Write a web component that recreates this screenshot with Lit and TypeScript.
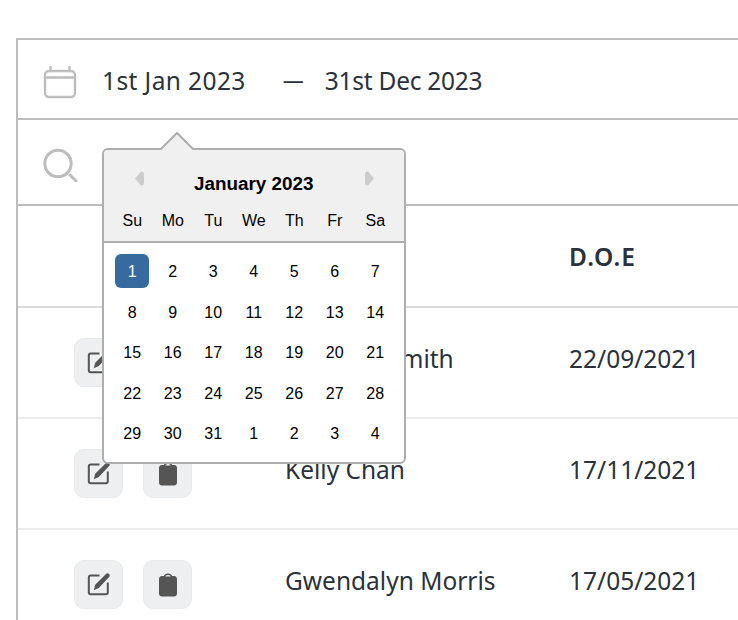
import { LitElement, html, css } from "lit";
import { customElement } from "lit/decorators.js";

const editIcon = html`<svg viewBox="0 0 24 24" width="24" height="24" aria-hidden="true">
  <path d="M12.500 2.500H3.800c-1.100 0-2 .9-2 2v14.700c0 1.100.9 2 2 2h15c1.100 0 2-.9 2-2V9.500" fill="none" stroke="#555" stroke-width="2"/>
  <path d="M19 .9c.9-.9 2.300-.9 3.100 0 .9.900.9 2.300 0 3.100L11.800 15 6.800 17.200 8.200 11.700z" fill="#555"/>
</svg>`;

const clipIcon = html`<svg viewBox="0 0 24 24" width="24" height="24" aria-hidden="true">
  <path fill-rule="evenodd" d="M6 3h1.800C8.300 1.400 10 .5 12 .5s3.700.9 4.200 2.500H18c1.700 0 3 1.300 3 3v14.500c0 1.700-1.300 3-3 3H6c-1.700 0-3-1.300-3-3V6c0-1.700 1.300-3 3-3zM9.300 3.500h5.400C14.300 2.500 13.300 2 12 2s-2.300.5-2.700 1.500z" fill="#555"/>
</svg>`;

const weeks = [
  [1, 2, 3, 4, 5, 6, 7],
  [8, 9, 10, 11, 12, 13, 14],
  [15, 16, 17, 18, 19, 20, 21],
  [22, 23, 24, 25, 26, 27, 28],
  [29, 30, 31, 1, 2, 3, 4],
];
const rows = [
  ["Michelle Smith", "22/09/2021"],
  ["Kelly Chan", "17/11/2021"],
  ["Gwendalyn Morris", "17/05/2021"],
];

@customElement("app-root")
export class AppRoot extends LitElement {
  static styles = css`
    :host {
      display: block;
      height: 620px;
      overflow: hidden;
      background: #fff;
      font-family: "Noto Sans", "Open Sans", sans-serif;
      color: #2b323b;
    }
    .wrap {
      position: relative;
      margin: 38px 0 0 16px;
      border-top: 2px solid #bdbdbd;
      border-left: 2px solid #bdbdbd;
    }
    .bar {
      display: flex;
      align-items: center;
      border-bottom: 2px solid #bdbdbd;
      padding-left: 25px;
    }
    .date { height: 78px; font-size: 24.500px; }
    .search { height: 84px; }
    .date svg { margin: 5px 25px 0 0; flex: none; }
    .range { display: flex; align-items: center; padding-top: 2px; }
    .from { letter-spacing: 0.4px; }
    .to { letter-spacing: -0.25px; }
    .dash { margin: 0 21px 0 37px; font-size: 21px; }
    .row {
      display: grid;
      grid-template-columns: 267px 284px 1fr;
      align-items: center;
      height: 109px;
      border-bottom: 2px solid #ececec;
      font-size: 24.500px;
    }
    .cell { padding-bottom: 9px; }
    .row.head { height: 100px; font-weight: 600; letter-spacing: 1.200px; border-bottom-color: #dcdcdc; }
    .btns { display: flex; gap: 20px; padding-left: 56px; }
    .btn {
      width: 49px;
      height: 49px;
      box-sizing: border-box;
      display: flex;
      align-items: center;
      justify-content: center;
      border: 1px solid #e8e9ea;
      border-radius: 10px;
      background: #eeeff1;
    }
    .pop {
      position: absolute;
      left: 84px;
      top: 108px;
      width: 303.500px;
      height: 316px;
      box-sizing: border-box;
      border: 2px solid #aeaeae;
      border-radius: 6px;
      background: #fff;
      font-family: "Liberation Sans", Arial, sans-serif;
      color: #000;
      font-size: 16px;
    }
    .tip { position: absolute; left: 54px; top: -19px; display: block; }
    .phead {
      position: relative;
      height: 93px;
      box-sizing: border-box;
      background: #f0f0f0;
      border-bottom: 2px solid #aeaeae;
      border-radius: 4px 4px 0 0;
      padding-top: 22px;
    }
    .month { text-align: center; font-weight: 700; font-size: 18.880px; line-height: 24px; }
    .nav { position: absolute; top: 21px; display: block; }
    .nav.prev { left: 31px; }
    .nav.next { right: 30px; }
    .names, .week {
      display: grid;
      grid-template-columns: repeat(7, 40.5px);
      justify-content: start;
      padding-left: 8px;
      text-align: center;
    }
    .names { margin-top: 15px; line-height: 20px; }
    .days { padding-top: 8px; }
    .week { height: 40.5px; align-items: center; justify-items: center; }
    .day { width: 34px; height: 34px; line-height: 35px; border-radius: 6px; }
    .day.sel { background: #376a9f; color: #fff; }
  `;

  render() {
    return html`<div class="wrap">
      <div class="bar date">
        <svg width="34" height="34" viewBox="0 0 34 34" fill="none" stroke="#bdbdbd" stroke-width="2.400" stroke-linecap="round" aria-hidden="true">
          <rect x="2" y="6" width="30" height="26" rx="4"/>
          <path d="M2 12.500h30M7.500 2v4M26.500 2v4"/>
        </svg>
        <div class="range"><span class="from">1st Jan 2023</span><span class="dash">—</span><span class="to">31st Dec 2023</span></div>
      </div>
      <div class="bar search">
        <svg width="36" height="40" viewBox="0 0 36 40" fill="none" stroke="#bdbdbd" stroke-width="3" stroke-linecap="round" aria-hidden="true">
          <circle cx="15" cy="21.500" r="13.200"/>
          <path d="M27 33l6 6"/>
        </svg>
      </div>
      <div class="row head"><span></span><span>Name</span><span>D.O.E</span></div>
      ${rows.map(
        ([name, doe]) => html`<div class="row">
          <div class="btns">
            <div class="btn">${editIcon}</div>
            <div class="btn">${clipIcon}</div>
          </div>
          <span class="cell">${name}</span><span class="cell">${doe}</span>
        </div>`
      )}
      <div class="pop">
        <svg class="tip" width="38" height="20" viewBox="0 0 38 20" aria-hidden="true">
          <path d="M1 20L19 2l18 18" fill="#f0f0f0" stroke="#aeaeae" stroke-width="2"/>
        </svg>
        <div class="phead">
          <svg class="nav prev" width="9" height="15" viewBox="0 0 9 15" aria-hidden="true"><path d="M0 7.500L6 .5Q9 0 9 3v9q0 3-3 2.500z" fill="#ccc"/></svg>
          <svg class="nav next" width="9" height="15" viewBox="0 0 9 15" aria-hidden="true"><path d="M9 7.500L3 .5Q0 0 0 3v9q0 3 3 2.500z" fill="#ccc"/></svg>
          <div class="month">January 2023</div>
          <div class="names">${["Su", "Mo", "Tu", "We", "Th", "Fr", "Sa"].map((d) => html`<span>${d}</span>`)}</div>
        </div>
        <div class="days">
          ${weeks.map(
            (w, i) => html`<div class="week">
              ${w.map((d, j) => html`<span class="day ${i === 0 && j === 0 ? "sel" : ""}">${d}</span>`)}
            </div>`
          )}
        </div>
      </div>
    </div>`;
  }
}
